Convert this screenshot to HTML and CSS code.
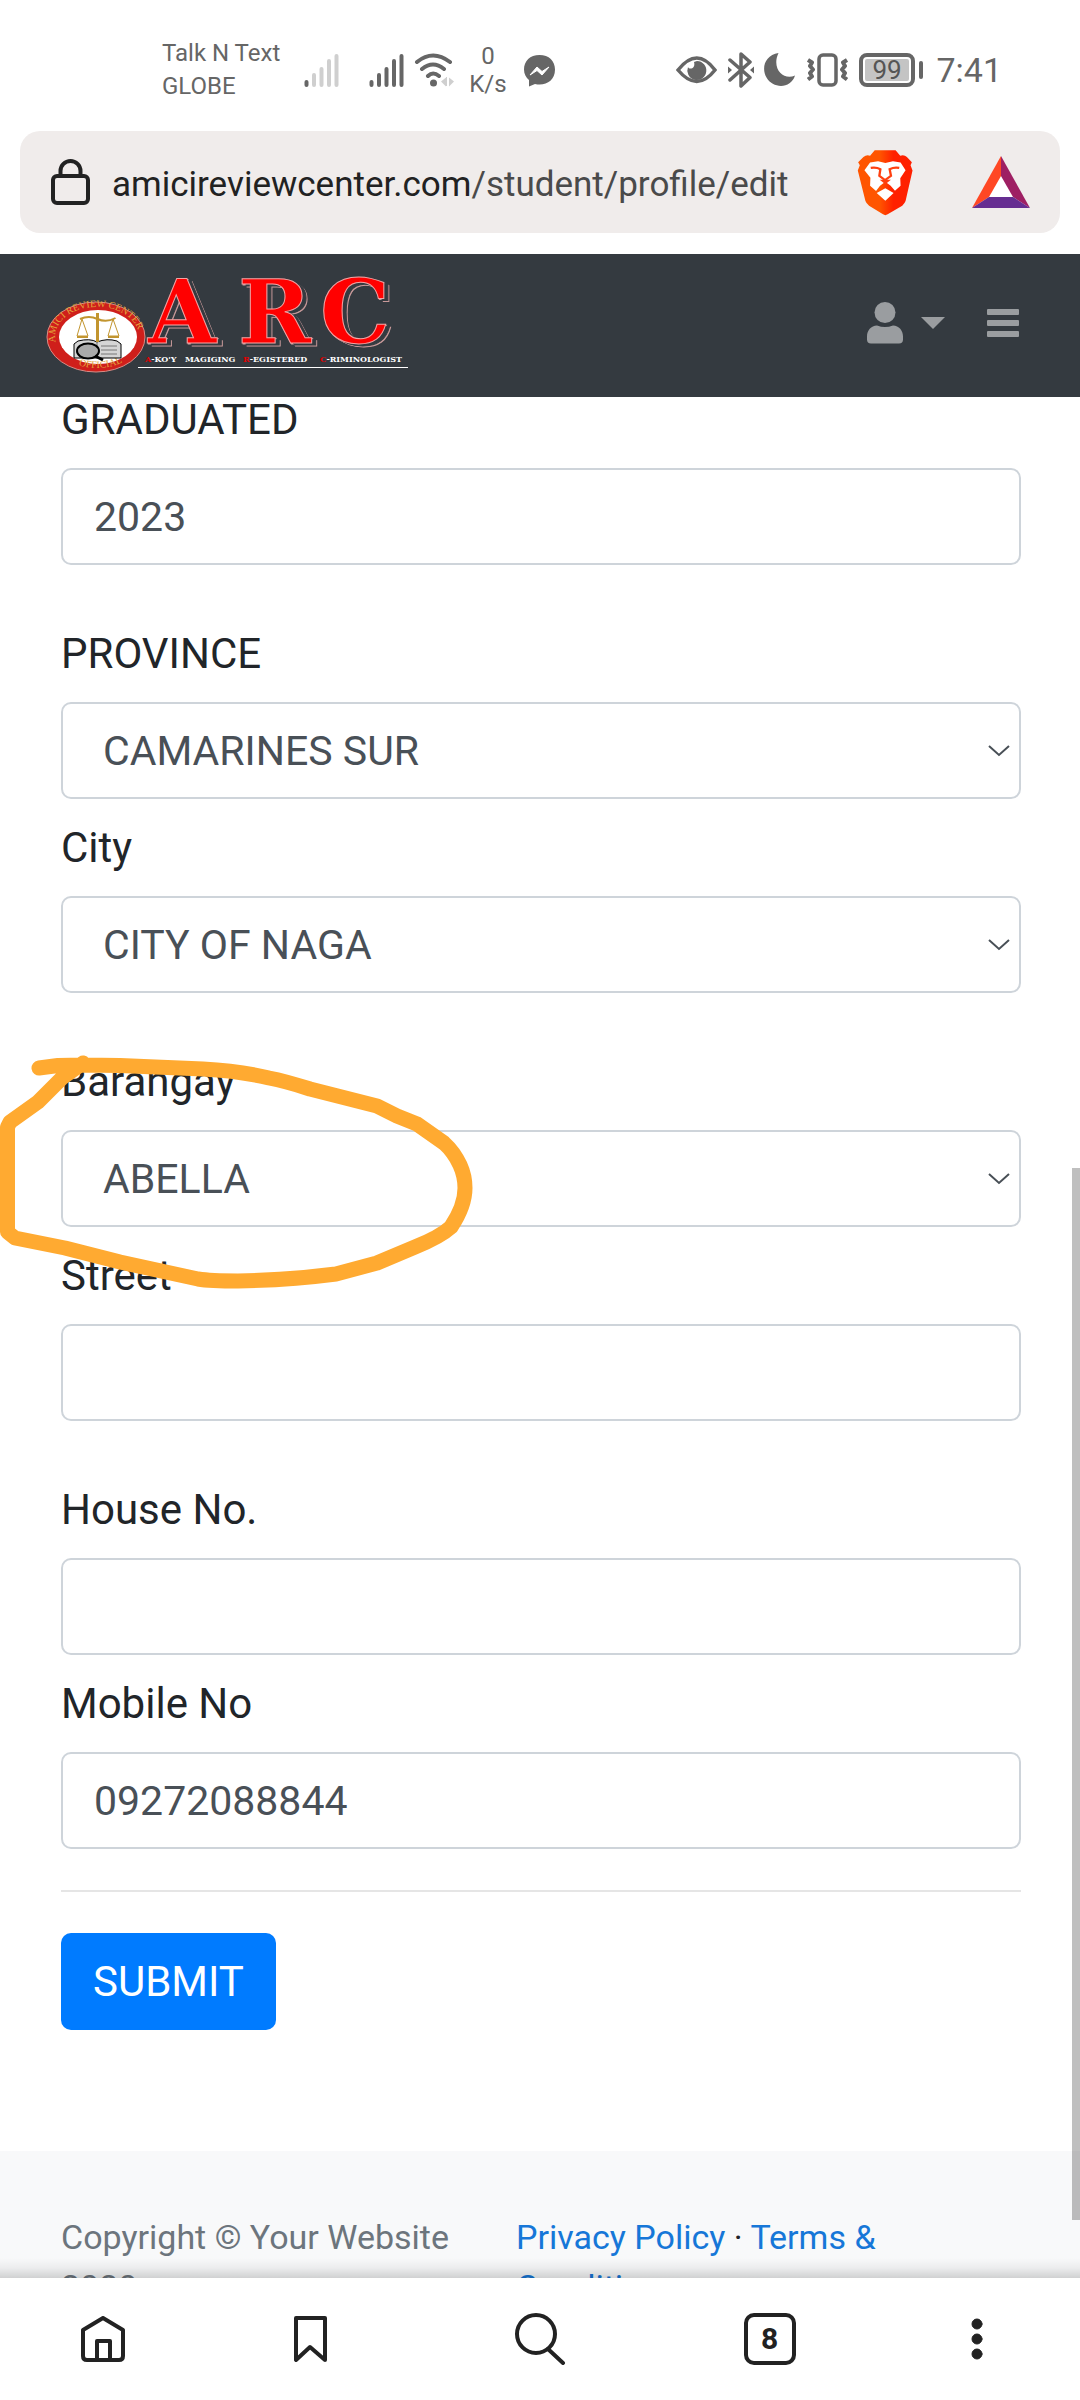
FILE: index.html
```
<!DOCTYPE html>
<html lang="en">
<head>
<meta charset="utf-8">
<meta name="viewport" content="width=device-width, initial-scale=1">
<title>Edit profile</title>
<link rel="stylesheet" href="styles.css">
</head>
<body>
<div class="phone">
  <div class="status">
    <div class="status-group">
      <div class="carrier">Talk N Text<br>GLOBE</div>
      <svg width="50" height="34" viewBox="0 0 50 34" stroke-width="4" stroke-linecap="round" stroke="#cfcfcf"><path d="M2.500 29v3" stroke="#666"/><path d="M10 22v10M17.500 16v16M25 8v24M32.500 3v29"/></svg>
      <svg width="40" height="34" viewBox="-5 0 40 34" stroke-width="4" stroke-linecap="round" stroke="#666"><path d="M2.500 29v3M10 22v10M17.500 16v16M25 8v24M32.500 3v29"/></svg>
      <svg width="42" height="34" viewBox="0 0 42 34" fill="none" stroke="#666" stroke-width="4" stroke-linecap="round"><path d="M3 9Q19 -4 36 9M8 16Q19 7 30 16M14 23Q19 18 25 23"/><circle cx="19.500" cy="30" r="3.500" fill="#666" stroke="none"/><path d="M27 28.500l5-4v9zM33 24v9l-1 0v-9zM40 28.500l-5-4v9z" fill="#cfcfcf" stroke="none"/></svg>
      <div class="rate">0<br>K/s</div>
      <svg width="40" height="34" viewBox="0 0 40 34"><path fill="#666" d="M19.500 2C10 2 4 8 4 16.500c0 4.500 2 8 5 10.500v6.500l6-2.500c10 2.500 20-3 20-14.500C35 8 29 2 19.500 2z"/><path d="M10 22l7-8 5 4.500 7-4.500-7 8-5-4.500z" fill="#fff" stroke="#fff"/></svg>
    </div>
    <div class="status-group">
      <svg width="42" height="34" viewBox="0 0 42 34"><path d="M2 17Q21-7 39 17Q21 40 2 17z" fill="none" stroke="#666" stroke-width="3.500"/><path d="M21 8a9.500 9.500 0 1 1-9 6c1 3 8 2 6-5z" fill="#666"/></svg>
      <svg width="26" height="36" viewBox="0 0 26 36" fill="none" stroke="#666" stroke-width="3.500" stroke-linejoin="round" stroke-linecap="round"><path d="M2 8l20 17.500-9 8.500V2l9 8L2 28"/><path d="M0 14.500v7l4-3.500zM26 14.500v7l-4-3.500z" fill="#666" stroke="none"/></svg>
      <svg width="33" height="34" viewBox="0 0 33 34"><path fill="#666" d="M14.500 0C1 2-3 15 2.500 24.500 9 36 27 36 31 22.500 20 28 7 16 14.500 0z"/></svg>
      <svg width="42" height="34" viewBox="0 0 42 34" fill="none" stroke="#666" stroke-width="3.500" stroke-linejoin="round"><rect x="12" y="2" width="17" height="30" rx="4"/><path d="M1 7l4 2.500-2 3.500 3 3.500-3 3.500 2 3.500-4 3M40 7l-4 2.500 2 3.500-3 3.500 3 3.500-2 3.500 4 3" stroke-width="4"/></svg>
      <div class="battery"><span class="battery-level">99</span></div>
      <time class="clock">7:41</time>
    </div>
  </div>

  <div class="address">
    <svg class="lock" width="42" height="48" viewBox="0 0 42 48" fill="none" stroke="#222" stroke-width="4"><rect x="3" y="18" width="35" height="27" rx="4"/><path d="M10.500 18v-5a10 10 0 0 1 20 0v5"/></svg>
    <span class="url">amicireviewcenter.com<span class="url-path">/student/profile/edit</span></span>
    <svg class="brave" width="58" height="67" viewBox="50 56 172 202">
      <defs><linearGradient id="mane"><stop offset=".4" stop-color="#ff5500"/><stop offset=".65" stop-color="#ff2000"/></linearGradient></defs>
      <path fill="url(#mane)" d="M105 60h63l14 16q12-4 20 4l15 16-4 9 6 16-21 92q-3 8-10 14l-44 26q-7 5-14 0l-42-26q-8-6-11-14L54 121l6-16-5-9 16-16q9-8 20-4z"/>
      <path fill="#fff" d="M74 120l17-23 24-4 22 5 23-5 23 4 15 23-16 24 1 23-17 15-13-15-16-12-16 12-12 16-18-16 1-24zM137 174l25 15-25 23-26-23z"/>
      <path fill="none" stroke="#ff4010" stroke-width="7" d="M93 113q17-3 29 4l-3 20 17 13 18-13-4-20q13-7 29-4"/><path d="M120 149h34l-17 13z" fill="#ff4010"/>
    </svg>
    <svg width="60" height="54" viewBox="0 0 60 54"><path fill="#fff" d="M30 20l13 23H17z"/><path fill="#ff4724" d="M30 1v20L18 42 1 53z"/><path fill="#9e1f63" d="M30 1v20l12 21 17 11z"/><path fill="#662d91" d="M1 53l17-11h24l17 11z"/></svg>
  </div>

  <nav class="navbar">
    <a class="brand" href="#" aria-label="ARC">
      <svg width="366" height="110" viewBox="45 270 366 110">
        <defs>
          <path id="ring-top" d="M57 345A42 30 0 1 1 137 345"/>
          <path id="ring-bottom" d="M66 358A45 33 0 0 0 128 358"/>
        </defs>
        <ellipse cx="96" cy="336" rx="49" ry="35" fill="#cf1f1b" stroke="#d98c86"/>
        <ellipse cx="98" cy="336" rx="39" ry="27" fill="#fff"/>
        <g class="ring-text"><text><textPath href="#ring-top" startOffset="4">AMICI REVIEW CENTER</textPath></text><text><textPath href="#ring-bottom" startOffset="14">OFFICIAL</textPath></text></g>
        <g fill="none" stroke="#000"><path fill="#d5d5d5" d="M74 357v-14l4-3q12-3 19 1 10-4 20-1l4 3v14z"/><path stroke="#777" d="M97 341v14M101 345h16M101 349h16M101 353h16"/><ellipse cx="88" cy="350" rx="11" ry="7.500" fill="#aaa" stroke-width="2"/><path stroke-width="3" d="M95 355l8 4"/></g>
        <g fill="none" stroke="#c2952f"><path stroke-width="3" d="M97.500 312v29"/><path stroke-width="2" d="M80 318q9-4 17.500 0 9 4 18-1"/><path d="M82 318l-5 17h11zM113 318l-5 17h11z"/><path stroke-width="2" d="M77 336h11M108 336h11"/></g>
        <g class="logo-letters"><text x="148" y="342">A</text><text x="238" y="342">R</text><text x="320" y="342">C</text></g>
        <g class="logo-tag"><text x="145" y="361"><tspan class="red">A</tspan>-KO'Y</text><text x="185" y="361">MAGIGING</text><text x="243" y="361"><tspan class="red">R</tspan>-EGISTERED</text><text x="320" y="361"><tspan class="red">C</tspan>-RIMINOLOGIST</text></g>
        <path d="M138 366.500h270" stroke="#fff"/>
      </svg>
    </a>
    <div class="nav-actions">
      <button class="nav-user" type="button" aria-label="Account">
        <svg width="38" height="42" viewBox="0 0 38 42" fill="#9a9da0"><circle cx="19" cy="10.500" r="10.500"/><path d="M11 23.500q8 3 16 0c6 0 10 5 10 11v3q0 4-4 4H5q-4 0-4-4v-3c0-6 4-11 10-11z"/></svg>
        <svg width="24" height="12" viewBox="0 0 24 12"><path d="M0 0h24L12 12z" fill="#9a9da0"/></svg>
      </button>
      <button class="nav-menu" type="button" aria-label="Menu">
        <svg width="32" height="28" viewBox="0 0 32 28" fill="#9a9da0"><rect width="32" height="6" rx="1"/><rect y="11" width="32" height="6" rx="1"/><rect y="22" width="32" height="6" rx="1"/></svg>
      </button>
    </div>
  </nav>

  <div class="viewport">
    <div class="scroller">
      <form class="form">
        <div class="group">
          <label for="graduated">GRADUATED</label>
          <input class="control" id="graduated" type="text" value="2023">
        </div>
        <div class="group">
          <label for="province">PROVINCE</label>
          <select class="control" id="province"><option>CAMARINES SUR</option></select>
          <label for="city">City</label>
          <select class="control" id="city"><option>CITY OF NAGA</option></select>
        </div>
        <div class="group">
          <label for="barangay">Barangay</label>
          <select class="control" id="barangay"><option>ABELLA</option></select>
          <label for="street">Street</label>
          <input class="control" id="street" type="text">
        </div>
        <div class="group">
          <label for="house">House No.</label>
          <input class="control" id="house" type="text">
          <label for="mobile">Mobile No</label>
          <input class="control" id="mobile" type="tel" value="09272088844">
        </div>
        <hr class="rule">
        <button class="submit" type="submit">SUBMIT</button>
      </form>
      <footer class="footer">
        <div class="copyright">Copyright © Your Website 2020</div>
        <div class="legal"><a href="#">Privacy Policy</a> · <a href="#">Terms &amp; Conditions</a></div>
      </footer>
      <svg class="marker" width="480" height="250" viewBox="0 1048 480 250"><path d="M39 1068L58 1065.500L83 1065L120 1065.500L203 1069Q240 1071 269 1078Q285 1081 310 1089L377 1106L397 1116L417 1124L444 1143Q454 1152 460 1165Q465 1176 465 1188Q465 1206 451 1227Q440 1237 415 1247L377 1263L336 1274Q290 1280 238 1281Q210 1281 198 1279L120 1262L65 1248L15 1238L7.500 1232V1127L10 1122L38 1102L62 1078L83 1063"/></svg>
    </div>
    <div class="scrollbar"></div>
  </div>

  <div class="toolbar">
    <button type="button" aria-label="Home"><svg width="46" height="46" viewBox="0 0 46 46"><path d="M3 14L23 2l20 12v26q0 4-4 4H7q-4 0-4-4zM17 44V25h13v19"/></svg></button>
    <button type="button" aria-label="Bookmarks"><svg width="34" height="46" viewBox="0 0 34 46"><path d="M3 2h29v42L17 31 3 44z"/></svg></button>
    <button type="button" aria-label="Search"><svg width="52" height="52" viewBox="0 0 52 52"><circle cx="22" cy="21" r="19"/><path d="M34 36l15 14"/></svg></button>
    <button type="button" aria-label="Tabs"><span class="tabs">8</span></button>
    <button type="button" aria-label="More"><svg class="dots" width="12" height="42" viewBox="0 0 12 42"><circle cx="6" cy="6" r="5"/><circle cx="6" cy="21" r="5"/><circle cx="6" cy="36" r="5"/></svg></button>
  </div>
</div>
</body>
</html>
```
FILE: styles.css
```
* {
  box-sizing: border-box;
}

body {
  margin: 0;
  background: #fff;
  color: #212529;
  font-family: Roboto, "Liberation Sans", sans-serif;
}

button {
  margin: 0;
  padding: 0;
  border: 0;
  background: none;
  font-family: inherit;
  cursor: pointer;
}

svg {
  display: block;
  flex: none;
}

.phone {
  display: flex;
  flex-direction: column;
  height: 100vh;
}

/* Device status bar */
.status {
  display: flex;
  align-items: center;
  justify-content: space-between;
  flex: none;
  height: 131px;
  padding: 8px 78px 0 162px;
  color: #666;
  font-size: 24px;
}

.status-group {
  display: flex;
  align-items: center;
  gap: 10px;
}

.carrier {
  width: 132px;
  line-height: 33px;
}

.rate {
  width: 44px;
  line-height: 28px;
  text-align: center;
}

.battery {
  position: relative;
  width: 56px;
  height: 34px;
  margin-right: 8px;
  padding: 2px;
  border: 4px solid #666;
  border-radius: 8px;
}

.battery::after {
  content: "";
  position: absolute;
  top: 4px;
  right: -12px;
  width: 4px;
  height: 18px;
  border-radius: 2px;
  background: #666;
}

.battery-level {
  display: block;
  height: 22px;
  border-radius: 2px;
  background: #c4c4c4;
  color: #555;
  font-size: 26px;
  line-height: 22px;
  text-align: center;
}

.clock {
  width: 69px;
  font-size: 34px;
  text-align: right;
}

/* Browser address bar */
.address {
  display: flex;
  align-items: center;
  flex: none;
  height: 102px;
  margin: 0 20px 21px;
  padding: 0 29px 0 30px;
  border-radius: 20px;
  background: #f0eceb;
}

.lock {
  margin-right: 20px;
}

.url {
  flex: 1;
  padding-top: 6px;
  color: #222;
  font-size: 35px;
  line-height: 42px;
}

.url-path {
  color: #4a4a4a;
}

.brave {
  margin-right: 57px;
}

/* Site header */
.navbar {
  display: flex;
  align-items: center;
  justify-content: space-between;
  flex: none;
  height: 143px;
  padding: 0 61px 0 45px;
  background: #343a40;
}

.brand {
  color: #fff;
}

.ring-text {
  fill: #e3a53a;
  font-family: "Liberation Serif", serif;
  font-size: 10px;
}

.logo-letters {
  fill: #f00;
  stroke: #f3a3a3;
  stroke-width: 1px;
  font-family: "DejaVu Serif", serif;
  font-size: 88px;
  font-weight: 700;
  filter: drop-shadow(4px 2px 0 #343a40) drop-shadow(1px 1px 0 #c99a9a);
}

.logo-tag {
  fill: #fff;
  font-family: "DejaVu Serif", serif;
  font-size: 8px;
  font-weight: 700;
}

.red {
  fill: #e00000;
}

.nav-actions {
  display: flex;
  align-items: center;
  gap: 42px;
  padding-bottom: 5px;
}

.nav-user {
  display: flex;
  align-items: center;
  gap: 17px;
}

/* Page */
.viewport {
  position: relative;
  flex: 1;
  min-height: 0;
}

.scroller {
  position: relative;
  height: 100%;
  overflow-x: hidden;
  overflow-y: auto;
  scrollbar-width: none;
}

.scrollbar {
  position: absolute;
  top: 771px;
  right: 0;
  bottom: 58px;
  width: 8px;
  background: rgba(0, 0, 0, .25);
}

.form {
  margin-top: -9px;
  padding: 0 59px 121px 61px;
}

.group {
  display: flex;
  flex-direction: column;
  gap: 17px;
  margin-bottom: 57px;
}

.group label {
  font-size: 42px;
  line-height: 63px;
}

.control {
  width: 100%;
  height: 97px;
  padding: 0 31px;
  border: 2px solid #ced4da;
  border-radius: 10px;
  background: #fff;
  color: #495057;
  font-family: inherit;
  font-size: 41px;
}

select.control {
  padding: 0 40px;
  appearance: none;
  background: #fff url("data:image/svg+xml,%3Csvg xmlns='http://www.w3.org/2000/svg' width='22' height='14'%3E%3Cpath d='M1 2l10 9 10-9' fill='none' stroke='%23495057' stroke-width='2'/%3E%3C/svg%3E") no-repeat right 9px center;
}

.rule {
  height: 2px;
  margin: -16px 0 41px;
  border: 0;
  background: #e5e5e5;
}

.submit {
  display: block;
  height: 97px;
  padding: 0 32px;
  border-radius: 10px;
  background: #007bff;
  color: #fff;
  font-size: 42px;
}

.marker {
  position: absolute;
  top: 651px;
  left: 0;
  fill: none;
  stroke: #ffaa31;
  stroke-width: 15px;
  stroke-linecap: round;
  stroke-linejoin: round;
  pointer-events: none;
}

.footer {
  display: grid;
  grid-template-columns: 428fr 505fr;
  gap: 27px;
  padding: 61px 59px 61px 61px;
  background: #f8f9fa;
  font-size: 34px;
  line-height: 50px;
}

.copyright {
  color: #6c757d;
}

.legal a {
  color: #1677d8;
  text-decoration: none;
}

/* Browser toolbar */
.toolbar {
  position: relative;
  display: grid;
  grid-template-columns: 206fr 208fr 252fr 207fr 207fr;
  align-items: center;
  justify-items: center;
  flex: none;
  height: 122px;
  background: #fff;
}

.toolbar::before {
  content: "";
  position: absolute;
  right: 0;
  bottom: 100%;
  left: 0;
  height: 20px;
  background: linear-gradient(transparent, rgba(0, 0, 0, .05) 50%, rgba(0, 0, 0, .16));
  pointer-events: none;
}

.toolbar svg {
  fill: none;
  stroke: #222;
  stroke-width: 4px;
  stroke-linecap: round;
  stroke-linejoin: round;
}

.toolbar .dots {
  fill: #222;
  stroke-width: 1px;
}

.tabs {
  display: block;
  width: 52px;
  height: 52px;
  border: 4px solid #222;
  border-radius: 10px;
  color: #222;
  font-size: 30px;
  font-weight: 700;
  line-height: 44px;
  text-align: center;
}
```
